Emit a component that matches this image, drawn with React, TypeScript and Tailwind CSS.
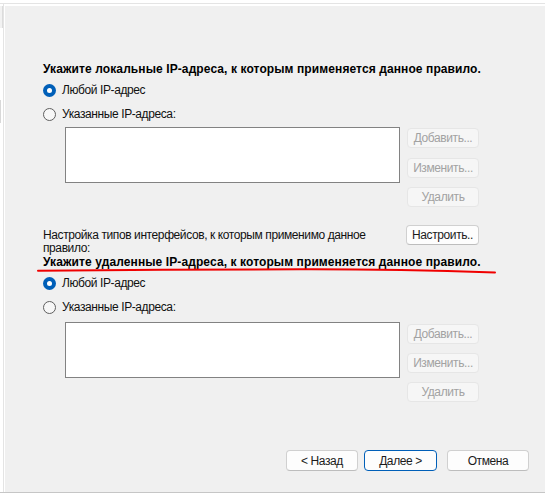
import type { ReactNode } from 'react'

function Radio({ checked, label }: { checked?: boolean; label: string }) {
  return (
    <div className="flex items-center h-4">
      {checked ? (
        <span className="w-[13px] h-[13px] rounded-full bg-[#005fb8] flex items-center justify-center">
          <span className="w-[5px] h-[5px] rounded-full bg-white" />
        </span>
      ) : (
        <span className="w-[13px] h-[13px] rounded-full border border-[#5f5f5f] bg-[#f7f7f7]" />
      )}
      <span className="ml-[6px] leading-4">{label}</span>
    </div>
  )
}

function Btn({ children, disabled, primary, className = '' }: { children: ReactNode; disabled?: boolean; primary?: boolean; className?: string }) {
  const look = disabled
    ? 'bg-[#f6f6f6] border-[#e6e6e6] text-[#a2a2a2]'
    : primary
      ? 'bg-[#fdfdfd] border-[#005fb8] text-[#1b1b1b]'
      : 'bg-[#fdfdfd] border-[#d0d0d0] border-b-[#bdbdbd] text-[#1b1b1b]'
  return (
    <div className={`flex items-center justify-center rounded-[4px] border leading-4 ${look} ${className}`}>
      {children}
    </div>
  )
}

function AddressBlock({ title, listTop, btnTop, btnGap }: { title: string; listTop: string; btnTop: string; btnGap: string }) {
  return (
    <>
      <div className="font-bold leading-4 h-4 tracking-[0.1px] text-black">{title}</div>
      <div className="mt-[5px]">
        <Radio checked label="Любой IP-адрес" />
      </div>
      <div className="mt-[8px]">
        <Radio label="Указанные IP-адреса:" />
      </div>
      <div className={`flex ${listTop}`}>
        <div className="ml-[22px] w-[335px] h-[56px] border border-[#828282] bg-white" />
        <div className={`ml-[7px] flex flex-col ${btnTop} ${btnGap}`}>
          <Btn disabled className="w-[72px] h-[20px]">Добавить...</Btn>
          <Btn disabled className="w-[72px] h-[20px]">Изменить...</Btn>
          <Btn disabled className="w-[72px] h-[20px]">Удалить</Btn>
        </div>
      </div>
    </>
  )
}

export default function App() {
  return (
    <div className="relative w-[545px] h-[493px] bg-white overflow-hidden flex flex-col text-[12px] tracking-[-0.4px] text-[#111] font-['Liberation_Sans',Arial,sans-serif]">
      <div className="h-[3px] shrink-0" />
      <div className="h-px bg-[#e4e4e4] shrink-0" />
      <div className="flex flex-1 min-h-0">
        <div className="w-[3px] flex flex-col">
          <div className="mt-[2px] h-[22px] bg-[#f2f2f2] border-r border-[#dcdcdc]" />
          <div className="mt-[72px] h-[23px] w-px bg-[#d8d8d8]" />
        </div>
        <div className="w-px bg-[#e4e4e4]" />
        <div className="w-px" />
        <div className="flex-1 flex flex-col mt-[2px] bg-[#f0f0f0] pl-[38px] pt-[55px] pb-[21px]">
          <AddressBlock
            title="Укажите локальные IP-адреса, к которым применяется данное правило."
            listTop="mt-[5px]"
            btnTop="mt-px"
            btnGap="gap-[9.5px]"
          />

          <div className="mt-[18px] flex items-start">
            <div className="pt-[4px] leading-[13px] w-[350px]">
              Настройка типов интерфейсов, к которым применимо данное
              <br />
              правило:
            </div>
            <Btn className="ml-[13px] w-[73px] h-[20px]">Настроить..</Btn>
          </div>

          <div className="-mt-px">
            <AddressBlock
              title="Укажите удаленные IP-адреса, к которым применяется данное правило."
              listTop="mt-[7px]"
              btnTop="mt-[2px]"
              btnGap="gap-[9px]"
            />
          </div>

          <div className="flex-1" />
          <div className="flex justify-end pr-[16px]">
            <Btn className="w-[72px] h-[21px]">&lt; Назад</Btn>
            <Btn primary className="ml-[6px] w-[73px] h-[21px]">Далее &gt;</Btn>
            <Btn className="ml-[10px] w-[82px] h-[21px]">Отмена</Btn>
          </div>
        </div>
      </div>
      <div className="h-px bg-[#c6c6c6] shrink-0" />

      <svg className="absolute left-0 top-0 pointer-events-none" width="545" height="493" viewBox="0 0 545 493">
        <path
          d="M38 270.8 C 120 270, 220 269.4, 300 269.2 S 440 270.6, 495 272.5"
          fill="none"
          stroke="#f00000"
          strokeWidth="2"
          strokeLinecap="round"
        />
      </svg>
    </div>
  )
}
